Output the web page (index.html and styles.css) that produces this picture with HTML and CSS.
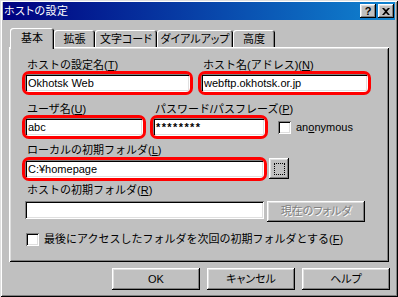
FILE: index.html
```html
<!DOCTYPE html>
<html lang="ja">
<head>
<meta charset="utf-8">
<title>ホストの設定</title>
<link rel="stylesheet" href="styles.css">
</head>
<body>
<div class="window">
  <div class="titlebar">
    <span class="title">ホストの設定</span>
    <div class="tbtns">
      <span class="tbtn">?</span>
      <span class="tbtn"><svg width="8" height="7" viewBox="0 0 8 7"><path d="M0 0h2l2 2 2-2h2L5 3.5 8 7H6L4 5 2 7H0l3-3.5z" fill="#000"/></svg></span>
    </div>
  </div>
  <div class="tabs">
    <div class="tab active t1">基本</div>
    <div class="tab t2">拡張</div>
    <div class="tab t3">文字コード</div>
    <div class="tab t4">ダイアルアップ</div>
    <div class="tab t5">高度</div>
  </div>
  <div class="panel">
    <div class="row">
      <div class="field w-host">
        <div class="lbl">ホストの設定名(<u>T</u>)</div>
        <div class="hl"><div class="input">Okhotsk Web</div></div>
      </div>
      <div class="field w-addr">
        <div class="lbl">ホスト名(アドレス)(<u>N</u>)</div>
        <div class="hl"><div class="input">webftp.okhotsk.or.jp</div></div>
      </div>
    </div>
    <div class="row row2">
      <div class="field w-user">
        <div class="lbl">ユーザ名(<u>U</u>)</div>
        <div class="hl"><div class="input">abc</div></div>
      </div>
      <div class="field w-pass">
        <div class="lbl">パスワード/パスフレーズ(<u>P</u>)</div>
        <div class="hl"><div class="input pw">********</div></div>
      </div>
      <div class="check anon">
        <span class="cb"></span>
        <span>an<u>o</u>nymous</span>
      </div>
    </div>
    <div class="group row3">
      <div class="lbl lbl-tight">ローカルの初期フォルダ(<u>L</u>)</div>
      <div class="inrow center">
        <div class="hl w-long"><div class="input">C:¥homepage</div></div>
        <div class="btn browse"><span class="dots"></span></div>
      </div>
    </div>
    <div class="group row4">
      <div class="lbl lbl-loose">ホストの初期フォルダ(<u>R</u>)</div>
      <div class="inrow">
        <div class="input w-long"></div>
        <div class="btn disabled cur">現在のフォルダ</div>
      </div>
    </div>
    <div class="check last">
      <span class="cb"></span>
      <span class="last-text">最後にアクセスしたフォルダを次回の初期フォルダとする(<u>F</u>)</span>
    </div>
  </div>
  <div class="buttons">
    <div class="btn dlg">OK</div>
    <div class="btn dlg">キャンセル</div>
    <div class="btn dlg">ヘルプ</div>
  </div>
</div>
</body>
</html>
```
FILE: styles.css
```css
* { box-sizing: border-box; margin: 0; padding: 0; }
html, body { width: 398px; height: 297px; overflow: hidden; }
body {
  background: #c0c0c0;
  font-family: "Liberation Sans", "Noto Sans CJK JP", sans-serif;
  font-size: 11px;
  line-height: 13px;
  color: #000;
}
u { text-underline-offset: 1px; }

.window {
  width: 398px;
  height: 297px;
  padding: 2px 3px 3px;
  background: #c0c0c0;
  box-shadow: inset 1px 1px #dfdfdf, inset -1px -1px #000, inset 2px 2px #fff, inset -2px -2px #808080;
  display: flex;
  flex-direction: column;
}

.titlebar {
  height: 18px;
  background: linear-gradient(to right, #000080, #1084d0);
  display: flex;
  align-items: center;
  padding: 0 1px 0 1px;
}
.title {
  color: #fff;
  flex: 1;
  white-space: nowrap;
  font-feature-settings: "palt";
  letter-spacing: 0.5px;
}
.tbtns { display: flex; gap: 2px; }
.tbtn {
  width: 16px;
  height: 14px;
  background: #c0c0c0;
  box-shadow: inset -1px -1px #000, inset 1px 1px #fff, inset -2px -2px #808080, inset 2px 2px #dfdfdf;
  display: flex;
  align-items: center;
  justify-content: center;
  font-weight: bold;
  font-size: 11px;
  line-height: 11px;
}

.tabs {
  display: flex;
  align-items: flex-end;
  height: 27px;
  padding-left: 7px;
}
.tab {
  height: 17px;
  padding-top: 3px;
  text-align: center;
  white-space: nowrap;
  background: #c0c0c0;
  font-feature-settings: "palt";
  border-radius: 3px 3px 0 0;
  box-shadow: inset 1px 1px #fff, inset -1px 0 #000, inset -2px 0 #808080;
}
.tab.active {
  height: 21px;
  margin-bottom: -2px;
  padding-top: 4px;
  position: relative;
  z-index: 2;
}
.t1 { width: 44px; }
.t2 { width: 41px; }
.t3 { width: 62px; }
.t4 { width: 76px; }
.t5 { width: 42px; }

.panel {
  margin: 0 6px;
  height: 215px;
  padding: 12px 0 0 16px;
  box-shadow: inset 1px 1px #fff, inset -1px -1px #000, inset 2px 2px #dfdfdf, inset -2px -2px #808080;
}

.row { display: flex; gap: 11px; }
.row2 { margin-top: 11px; gap: 10px; }
.field { flex: none; }
.w-host { width: 165px; }
.w-addr { width: 167px; }
.w-user { width: 118px; }
.w-pass { width: 112px; }
.w-long { width: 239px; flex: none; }

.lbl { padding-left: 2px; margin-bottom: 2px; white-space: nowrap; }
.lbl-tight { margin-bottom: 1px; }
.lbl-loose { margin-bottom: 4px; }

.input {
  height: 18px;
  background: #fff;
  box-shadow: inset 1px 1px #808080, inset -1px -1px #fff, inset 2px 2px #000, inset -2px -2px #dfdfdf;
  padding: 0 3px;
  line-height: 18px;
  white-space: nowrap;
  overflow: hidden;
}
.pw { font-weight: bold; letter-spacing: 1.4px; }

.hl { position: relative; }
.hl::after {
  content: "";
  position: absolute;
  inset: -3px;
  border: 3px solid #f00;
  border-radius: 7px;
  pointer-events: none;
}

.check { display: flex; align-items: center; gap: 5px; white-space: nowrap; }
.anon { align-self: flex-end; height: 18px; margin-left: 3px; }
.cb {
  width: 13px;
  height: 13px;
  flex: none;
  background: #fff;
  box-shadow: inset 1px 1px #808080, inset -1px -1px #fff, inset 2px 2px #000, inset -2px -2px #dfdfdf;
}

.group { display: block; }
.row3 { margin-top: 8px; }
.row4 { margin-top: 5px; }
.inrow { display: flex; align-items: flex-start; gap: 3px; }
.inrow.center { align-items: center; gap: 5px; }

.btn {
  background: #c0c0c0;
  box-shadow: inset -1px -1px #000, inset 1px 1px #fff, inset -2px -2px #808080, inset 2px 2px #dfdfdf;
  display: flex;
  align-items: center;
  justify-content: center;
  white-space: nowrap;
  font-feature-settings: "palt";
}
.browse { width: 20px; height: 21px; }
.dots { width: 11px; height: 12px; border: 1px dotted #000; }
.cur { width: 98px; height: 21px; }
.disabled { color: #808080; text-shadow: 1px 1px #fff; }

.last { margin-top: 11px; margin-left: 1px; }

.buttons {
  display: flex;
  justify-content: flex-end;
  gap: 7px;
  margin-top: 6px;
  padding-right: 5px;
}
.dlg { width: 88px; height: 22px; }
```
